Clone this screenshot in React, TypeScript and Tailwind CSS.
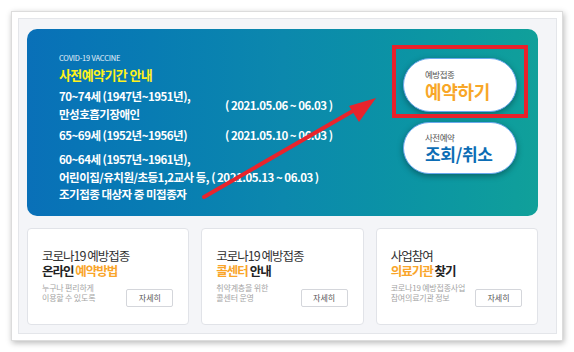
import React from 'react';

const FONT = { fontFamily: '"Noto Sans CJK KR", "Noto Sans", sans-serif' };

type CardProps = {
  line1: string;
  line2: React.ReactNode;
  desc: string[];
};

const InfoCard = ({ line1, line2, desc }: CardProps) => (
  <div className="h-[97px] rounded-[4px] border border-[#e1e3e8] bg-white pl-[14px] pr-[15px] pt-[19px]">
    <p className="text-[12.5px] leading-[16px] tracking-[-1px] text-[#333]">{line1}</p>
    <p className="-mt-[1px] text-[12.5px] font-bold leading-[16px] tracking-[-1px] text-[#222]">{line2}</p>
    <div className="mt-[4px] flex items-start justify-between">
      <div className="text-[8px] leading-[10px] tracking-[-0.2px] text-[#a5a5a5]">
        {desc.map((d) => (
          <p key={d}>{d}</p>
        ))}
      </div>
      <button className="mt-[6px] flex h-[18px] w-[47px] items-center justify-center rounded-[2px] border border-[#d4d6db] bg-white text-[8px] text-[#555]">
        자세히
      </button>
    </div>
  </div>
);

export default function App() {
  return (
    <div className="relative h-[352px] w-[574px] overflow-hidden bg-white pl-[11px] pt-[11px]" style={FONT}>
      {/* marco */}
      <div className="h-[330px] w-[552px] border border-[#dcdcdc] bg-white p-[6px] shadow-[1px_2px_6px_rgba(0,0,0,0.28)]">
        <div className="h-[316px] w-[539px] border border-[#e4e6ea] bg-[#f4f5f8] pl-[8px] pt-[10px]">
          {/* banner */}
          <div className="relative flex h-[187px] w-[511px] rounded-[10px] bg-linear-to-r from-[#0970b8] via-[#0c88ad] to-[#10a09a] text-white">
            <div className="pl-[32px] pt-[24px]">
              <p className="text-[7.5px] leading-[10px] tracking-[-0.2px] text-[#e8f3fa]">COVID-19 VACCINE</p>
              <p className="mt-[3px] text-[13px] font-bold leading-[18px] tracking-[-0.6px] text-[#fff21a]">사전예약기간 안내</p>

              <div className="text-[11.5px] font-bold leading-[18px] tracking-[-0.5px]">
                <div className="mt-[3px] grid grid-cols-[166px_auto] items-center">
                  <div>
                    <p>70~74세 (1947년~1951년),</p>
                    <p>만성호흡기장애인</p>
                  </div>
                  <p>( 2021.05.06 ~ 06.03 )</p>
                </div>
                <div className="mt-[3px] grid grid-cols-[166px_auto] items-center">
                  <p>65~69세 (1952년~1956년)</p>
                  <p>( 2021.05.10 ~ 06.03 )</p>
                </div>
                <div className="mt-[6px]">
                  <p>60~64세 (1957년~1961년),</p>
                  <p>어린이집/유치원/초등1,2교사 등, ( 2021.05.13 ~ 06.03 )</p>
                  <p className="-mt-[1px]">조기접종 대상자 중 미접종자</p>
                </div>
              </div>
            </div>

            <div className="ml-auto mr-[21px] flex flex-col gap-[10px] pt-[29px]">
              <button className="flex h-[54px] w-[114px] flex-col items-start justify-center rounded-full border-[1.5px] border-[#6aa9ee] bg-white pl-[21px] shadow-[0_2px_6px_rgba(0,0,0,0.35)]">
                <span className="text-[8.5px] leading-[11px] tracking-[-0.5px] text-[#555]">예방접종</span>
                <span className="text-[18px] font-bold leading-[22px] tracking-[-0.3px] text-[#f8a728]">예약하기</span>
              </button>
              <button className="flex h-[52px] w-[114px] flex-col items-start justify-center rounded-full border-[1.5px] border-[#6aa9ee] bg-white pl-[21px] shadow-[0_2px_6px_rgba(0,0,0,0.35)]">
                <span className="text-[8.5px] leading-[11px] tracking-[-0.5px] text-[#555]">사전예약</span>
                <span className="text-[17px] font-bold leading-[22px] tracking-[-0.3px] text-[#0c6db5]">조회/취소</span>
              </button>
            </div>

            {/* recuadro rojo */}
            <div className="absolute left-[365px] top-[16px] h-[73px] w-[136px] border-[4px] border-[#e8212b]" />
          </div>

          {/* tarjetas */}
          <div className="mt-[12px] grid w-[511px] grid-cols-3 gap-[12px]">
            <InfoCard
              line1="코로나19 예방접종"
              line2={<>온라인 <span className="text-[#f9a52a]">예약방법</span></>}
              desc={['누구나 편리하게', '이용할 수 있도록']}
            />
            <InfoCard
              line1="코로나19 예방접종"
              line2={<><span className="text-[#f9a52a]">콜센터</span> 안내</>}
              desc={['취약계층을 위한', '콜센터 운영']}
            />
            <InfoCard
              line1="사업참여"
              line2={<><span className="text-[#f9a52a]">의료기관</span> 찾기</>}
              desc={['코로나19 예방접종사업', '참여의료기관 정보']}
            />
          </div>
        </div>
      </div>

      {/* flecha roja */}
      <svg className="pointer-events-none absolute left-0 top-0" width="574" height="352" viewBox="0 0 574 352">
        <line x1="204" y1="197" x2="358" y2="108" stroke="#e8242c" strokeWidth="4" strokeLinecap="round" />
        <polygon points="349,106 376,98 359,122" fill="#e8242c" />
      </svg>
    </div>
  );
}
